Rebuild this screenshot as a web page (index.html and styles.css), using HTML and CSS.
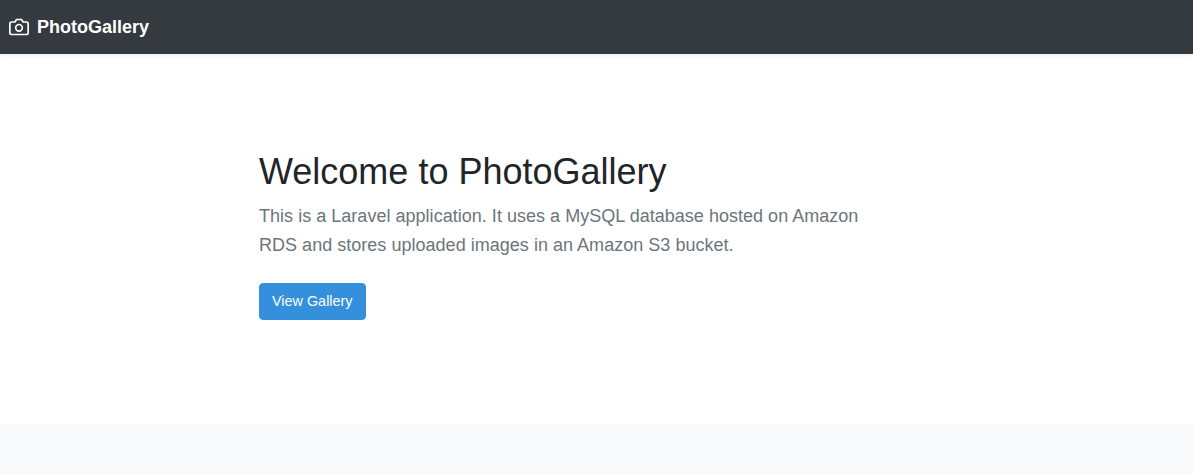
FILE: index.html
```html
<!DOCTYPE html>
<html lang="en">
<head>
<meta charset="utf-8">
<title>PhotoGallery</title>
<link rel="stylesheet" href="styles.css">
</head>
<body>
<header class="navbar">
  <a class="brand">
    <svg class="brand-icon" width="20" height="20" viewBox="0 0 24 24" fill="none" stroke="currentColor" stroke-width="2"><path d="M23 19a2 2 0 0 1-2 2H3a2 2 0 0 1-2-2V8a2 2 0 0 1 2-2h4l2-3h6l2 3h4a2 2 0 0 1 2 2z"/><circle cx="12" cy="13" r="4"/></svg>
    <strong>PhotoGallery</strong>
  </a>
</header>
<main>
  <section class="hero">
    <div class="hero-content">
      <h1 class="title">Welcome to PhotoGallery</h1>
      <p class="lead">This is a Laravel application. It uses a MySQL database hosted on Amazon RDS and stores uploaded images in an Amazon S3 bucket.</p>
      <p class="actions"><a class="btn">View Gallery</a></p>
    </div>
  </section>
</main>
</body>
</html>
```
FILE: styles.css
```css
* { box-sizing: border-box; }
body {
  margin: 0;
  min-height: 475px;
  background: #f8fafc;
  color: #212529;
  font: 14.4px/1.6 "Liberation Sans", Arial, sans-serif;
}
.navbar {
  position: relative;
  display: flex;
  align-items: center;
  height: 54px;
  padding: 0 9px;
  background: #343a40;
  box-shadow: 0 2px 4px rgba(0, 0, 0, .055);
}
.brand {
  display: flex;
  align-items: center;
  color: #fff;
  font-size: 18px;
}
.brand-icon { margin-right: 8px; }
.hero {
  height: 370px;
  padding-top: 96px;
  background: #fff;
}
.hero-content {
  width: 675px;
  margin: 0 auto;
}
.title {
  margin: 0 0 8.6px;
  font-size: 36px;
  font-weight: 400;
  line-height: 1.2;
}
.lead {
  width: 625px;
  margin: 0 0 13.4px;
  color: #6c757d;
  font-size: 18px;
  letter-spacing: .024px;
}
.actions { margin: 0; padding-top: 10px; }
.btn {
  display: inline-block;
  padding: 6px 12px;
  border: 1px solid #3490dc;
  border-radius: 4px;
  background: #3490dc;
  color: #fff;
}
```
